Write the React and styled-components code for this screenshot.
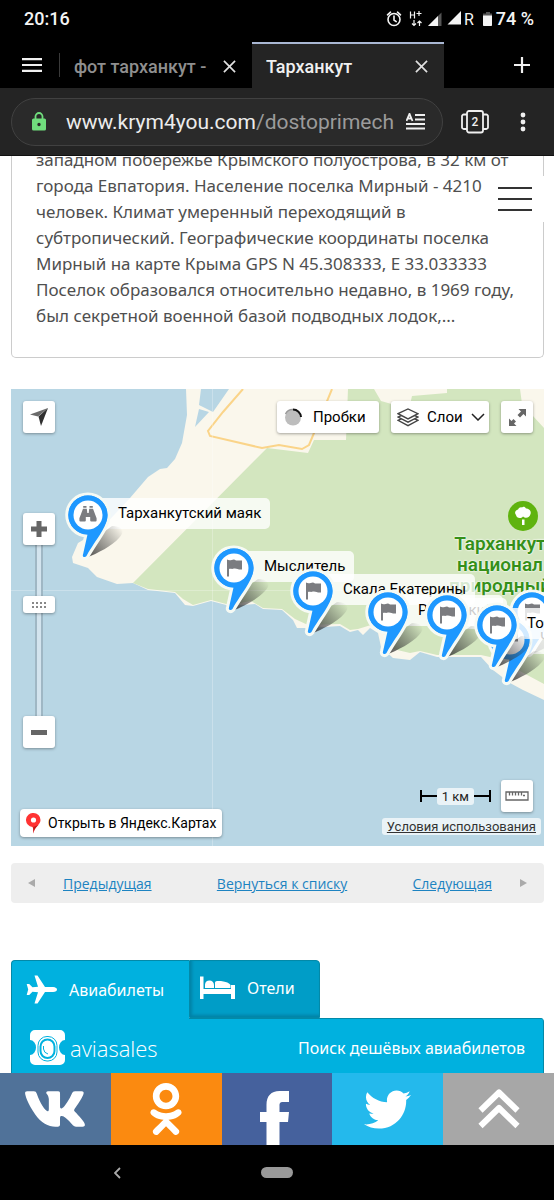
import React, { useState } from 'react';
import styled, { createGlobalStyle } from 'styled-components';
import { FaVk, FaOdnoklassniki, FaTwitter } from 'react-icons/fa';

const GlobalStyle = createGlobalStyle`
  *, *::before, *::after { box-sizing: border-box; }
  body { margin: 0; background: #000; }
  button { border: 0; padding: 0; margin: 0; background: none; color: inherit; font: inherit; cursor: pointer; }
  svg { display: block; flex: none; }
`;

const ui = 'Roboto, "Noto Sans", sans-serif';
const site = '"Noto Sans", "Open Sans", sans-serif';

const Screen = styled.div`
  display: flex;
  flex-direction: column;
  height: 100vh;
  overflow: hidden;
  background: #fff;
  font-family: ${ui};
`;

/* ---------- phone and browser chrome ---------- */

const StatusBar = styled.div`
  display: flex;
  flex: none;
  align-items: center;
  justify-content: space-between;
  height: 42px;
  padding: 0 20px 5px 24px;
  background: #000;
  color: #f4f4f4;
  font-size: 18px;
  font-weight: 500;
`;

const StatusIcons = styled.div`
  display: flex;
  align-items: center;
`;

const TabStrip = styled.div`
  display: flex;
  flex: none;
  height: 46px;
  background: #000;
  color: #e8e8e8;
`;

const StripButton = styled.button`
  display: flex;
  align-items: center;
  justify-content: center;
  width: ${(p) => p.$width}px;
  margin-left: ${(p) => (p.$end ? 'auto' : 0)};
  padding-left: ${(p) => (p.$end ? 0 : 4)}px;
`;

const BrowserTab = styled.div`
  display: flex;
  align-items: center;
  justify-content: space-between;
  width: 192px;
  padding: 0 16px 0 14px;
  border-top: 2px solid ${(p) => (p.$active ? '#a9b7d3' : 'transparent')};
  background: ${(p) => (p.$active ? '#242424' : '#000')};
  color: ${(p) => (p.$active ? '#f0f0f0' : '#8f8f8f')};
`;

const TabDivider = styled.span`
  align-self: center;
  width: 1px;
  height: 24px;
  background: #3a3a3a;
`;

const TabTitle = styled.button`
  width: 136px;
  overflow: hidden;
  text-align: left;
  white-space: nowrap;
  font-size: 18px;
  font-weight: 500;
`;

const Toolbar = styled.div`
  display: flex;
  flex: none;
  align-items: center;
  height: 68px;
  padding: 0 15px 0 11px;
  border-bottom: 1px solid #111;
  background: #242424;
  color: #ececec;
`;

const AddressBar = styled.div`
  display: flex;
  flex: 1;
  align-items: center;
  min-width: 0;
  height: 48px;
  padding: 0 17px 0 20px;
  border: 1px solid #414141;
  border-radius: 24px;
  background: #2a2a2a;
`;

const Address = styled.button`
  flex: 1;
  min-width: 0;
  margin: 0 12px 0 20px;
  overflow: hidden;
  color: #9b9b9b;
  font-size: 21px;
  text-align: left;
  white-space: nowrap;
`;

const Host = styled.span`
  color: #ececec;
`;

const ToolButton = styled.button`
  display: flex;
  align-items: center;
  justify-content: center;
  width: ${(p) => p.$width}px;
  height: 48px;
`;

/* ---------- page ---------- */

const Page = styled.main`
  position: relative;
  flex: 1;
  min-height: 0;
  padding: 0 10px 0 11px;
  overflow: hidden;
  background: #fff;
  font-family: ${site};
`;

const Card = styled.article`
  padding: 0 20px 28px 24px;
  margin-top: -9px;
  border: 1px solid #ccc;
  border-top: 0;
  border-radius: 0 0 5px 5px;
`;

const CardText = styled.p`
  margin: 0;
  color: #4f4f4f;
  font-size: 17px;
  line-height: 26px;
  white-space: pre-line;
`;

const MenuButton = styled.button`
  position: absolute;
  top: 20px;
  right: 0;
  display: flex;
  flex-direction: column;
  justify-content: center;
  gap: 9px;
  width: 65px;
  height: 46px;
  padding: 0 22px 0 9px;
  background: #fff;
`;

const MenuLine = styled.span`
  height: 2px;
  background: #333;
`;

const PagerBar = styled.nav`
  display: flex;
  align-items: center;
  justify-content: space-between;
  height: 40px;
  margin-top: 17px;
  padding: 0 17px;
  border-radius: 4px;
  background: #eee;
`;

const PagerLink = styled.a`
  display: flex;
  align-items: center;
  gap: 28px;
  color: #1d83c1;
  font-family: "Open Sans", "Noto Sans", sans-serif;
  font-size: 14px;
`;

/* ---------- map ---------- */

const MapFrame = styled.section`
  position: relative;
  height: 457px;
  margin-top: 31px;
  overflow: hidden;
  background: #b8d6e4;
  color: #000;
  font-family: ${ui};
`;

const Terrain = styled.svg`
  position: absolute;
  inset: 0;
  width: 100%;
  height: 100%;
`;

const ParkLabel = styled.div`
  position: absolute;
  left: 435px;
  top: 144px;
  width: 108px;
  color: #35901a;
  font-size: 19px;
  font-weight: 600;
  line-height: 21px;
  text-align: center;
  white-space: pre;
  text-shadow: 0 0 2px #fff, 0 0 2px #fff;
`;

const ParkIcon = styled.svg`
  position: absolute;
  left: 497px;
  top: 112px;
`;

const Placemark = styled.div`
  position: absolute;
  left: ${(p) => p.$x}px;
  top: ${(p) => p.$y}px;
`;

const PinSvg = styled.svg`
  position: absolute;
  left: -25px;
  top: -25px;
`;

const PinLabel = styled.span`
  position: absolute;
  left: 0;
  top: -17px;
  display: flex;
  gap: 41px;
  min-width: 60px;
  height: 31px;
  padding: 0 9px 0 30px;
  border-radius: 5px;
  background: rgba(255, 255, 255, 0.8);
  font-size: 15px;
  line-height: 31px;
  white-space: pre;
`;

const Controls = styled.div`
  position: absolute;
  top: ${(p) => p.$top};
  right: ${(p) => p.$right};
  bottom: ${(p) => p.$bottom};
  left: ${(p) => p.$left};
  display: flex;
  flex-direction: ${(p) => (p.$column ? 'column' : 'row')};
  align-items: ${(p) => (p.$column ? 'flex-end' : 'center')};
  gap: ${(p) => p.$gap || 0}px;
`;

const MapButton = styled.button`
  position: relative;
  display: flex;
  align-items: center;
  justify-content: ${(p) => (p.$wide ? 'flex-start' : 'center')};
  gap: ${(p) => p.$gap || 0}px;
  width: ${(p) => p.$wide || 32}px;
  height: 32px;
  padding: 0 ${(p) => (p.$wide ? 6 : 0)}px;
  border-radius: 3px;
  background: #fff;
  box-shadow: 0 1px 3px rgba(0, 0, 0, 0.35);
  font-size: 15px;
`;

const dot = (x, y) => `radial-gradient(circle, #888 1px, transparent 1px) ${x}px ${y}px / 4px 4px no-repeat`;

const ZoomRange = styled.input`
  width: 32px;
  height: 171px;
  margin: 0;
  appearance: none;
  background: linear-gradient(90deg, transparent 12px, #9fb7c4 12px 14px, #d3e4ee 14px 18px, #9fb7c4 18px 20px, transparent 20px);
  writing-mode: vertical-lr;

  &::-webkit-slider-thumb {
    appearance: none;
    width: 32px;
    height: 17px;
    border-radius: 3px;
    background:
      ${[8, 12, 16, 20].map((x) => `${dot(x, 5)}, ${dot(x, 9)}`).join(', ')},
      #fff;
    box-shadow: 0 1px 3px rgba(0, 0, 0, 0.35);
  }
`;

const OpenLink = styled.a`
  display: flex;
  align-items: center;
  gap: 7px;
  height: 28px;
  padding: 0 6px;
  border-radius: 4px;
  background: #fff;
  box-shadow: 0 1px 3px rgba(0, 0, 0, 0.35);
  color: #000;
  font-size: 14px;
  text-decoration: none;
`;

const Toolset = styled.div`
  display: flex;
  align-items: center;
  gap: 10px;
  padding-right: 8px;
`;

const ScaleRow = styled.div`
  display: flex;
  align-items: center;
`;

const ScaleEnd = styled.span`
  width: 17px;
  height: 12px;
  background: linear-gradient(#000, #000) center / 100% 2px no-repeat;
  border: solid #000;
  border-width: ${(p) => (p.$right ? '0 2px 0 0' : '0 0 0 2px')};
`;

const ScaleValue = styled.span`
  padding: 0 5px;
  border-radius: 3px;
  background: rgba(255, 255, 255, 0.7);
  color: #222;
  font-size: 13px;
  line-height: 17px;
`;

const Terms = styled.a`
  padding: 0 5px;
  border-radius: 3px;
  background: rgba(255, 255, 255, 0.7);
  color: #333;
  font-size: 13px;
  line-height: 17px;
`;

/* ---------- ticket search widget ---------- */

const Widget = styled.section`
  margin-top: 57px;
  color: #fff;
`;

const WidgetTabs = styled.div`
  display: flex;
`;

const WidgetTab = styled.button`
  position: relative;
  display: flex;
  align-items: center;
  gap: 12px;
  width: ${(p) => (p.$active ? 178 : 131)}px;
  height: 58px;
  padding: 0 10px ${(p) => (p.$active ? '0 14px' : '2px 10px')};
  border: 1px solid #0389a8;
  border-bottom-width: ${(p) => (p.$active ? 0 : 1)}px;
  border-right-width: ${(p) => (p.$active ? 0 : 1)}px;
  border-radius: ${(p) => (p.$active ? '4px 0 0 0' : '0 4px 0 0')};
  background: ${(p) => (p.$active ? '#00b1df' : '#009dc7')};
  box-shadow: ${(p) => (p.$active ? 'none' : 'inset 2px -2px 3px rgba(0, 80, 110, 0.35)')};
  font-size: 16px;
`;

const WidgetPanel = styled.div`
  display: flex;
  align-items: center;
  justify-content: space-between;
  height: 90px;
  padding: 0 18px 30px;
  border: 1px solid #0389a8;
  border-top: 0;
  border-radius: 0 4px 0 0;
  background:
    linear-gradient(#0389a8, #0389a8) 177px 0 / 100% 1px no-repeat,
    #00b1df;
  font-size: 16px;
`;

const Brand = styled.a`
  display: flex;
  align-items: center;
  gap: 5px;
  color: #fff;
  font-family: "Open Sans", sans-serif;
  font-size: 22px;
  font-weight: 300;
  text-decoration: none;
`;

/* ---------- bottom bars ---------- */

const ShareBar = styled.nav`
  display: grid;
  flex: none;
  grid-template-columns: repeat(5, 1fr);
  height: 72px;
`;

const ShareLink = styled.a`
  display: flex;
  align-items: center;
  justify-content: center;
  overflow: hidden;
  background: ${(p) => p.$color};
  color: #fff;
`;

const SystemNav = styled.div`
  display: grid;
  flex: none;
  grid-template-columns: 1fr 84px 1fr;
  align-items: center;
  justify-items: center;
  height: 55px;
  background: #000;
`;

const HomePill = styled.button`
  width: 32px;
  height: 11px;
  border-radius: 6px;
  background: #999;
`;

/* ---------- drawings ---------- */

const Cross = () => (
  <svg width="13" height="13" viewBox="0 0 14 14" stroke="#e0e0e0" strokeWidth="1.8">
    <path d="M1 1l12 12M13 1L1 13" />
  </svg>
);

const StatusGlyphs = () => (
  <svg width="110" height="20" viewBox="384 8 110 20" fill="#f4f4f4">
    <g fill="none" stroke="#f4f4f4" strokeWidth="1.6" strokeLinecap="round">
      <circle cx="392" cy="18.5" r="6" />
      <path d="M392 15v4l2.200 1.600M385.500 13.800l3-2.600M398.500 13.800l-3-2.600" />
    </g>
    <g stroke="#f4f4f4" strokeWidth="1.2" fill="none">
      <path d="M408.500 10.500v7M412.500 10.500v7M408.500 14h4M414.500 12.500h5M417 10v5" />
      <path d="M412 19v5.500M410 22.500l2 2 2-2M417.500 25v-5M415.500 22l2-2 2 2" />
    </g>
    <path d="M439.500 11.500V25H426z" fill="#555" />
    <path d="M436 15V25H426z" />
    <path d="M459 10V23.500H445.500z" />
    <path d="M484 11h4v1.500h2V25h-9V12.500h3z" fill="#555" />
    <path d="M481 14.500h9V24a1 1 0 0 1-1 1h-7a1 1 0 0 1-1-1z" />
    <text x="462" y="24" fontSize="16" fontWeight="400" fontFamily="Roboto, sans-serif">R</text>
  </svg>
);

const pinBody = 'M0 -19.5A19.5 19.5 0 0 1 19.5 0C19.5 12 8 24 -1.5 41C-3 43 -6 42 -5 39.5L-0.5 19.5A19.5 19.5 0 0 1 0 -19.5Z';

const FlagGlyph = () => (
  <path d="M-7 -8.5C-3 -6 -1 -10.5 2 -7.5L8 -7.500V1.5C4 2 3 0 0 0.5C-2 1.5 -3 0.5 -5 1V8.5H-7Z" fill="#7b7c80" />
);

const BinocularGlyph = () => (
  <g fill="#7b7c80">
    <path d="M-4.800 -9h3.300v1.800h-3.300zM1.500 -9h3.300v1.800H1.500z" />
    <path d="M-5 -6.200h3.800l.5 4.200h1.400l.5-4.200H5L8.600 3.200V5.500a1 1 0 0 1-1 1H3.200a1 1 0 0 1-1-1V2h-4.400V5.500a1 1 0 0 1-1 1H-7.600a1 1 0 0 1-1-1V3.200z" />
  </g>
);

const Pin = ({ kind }) => (
  <PinSvg width="76" height="74" viewBox="-25 -25 76 74">
    <path d="M-2 43L9 22L24 11C34 11 38 16 31 23C24 31 10 38 -2 43Z" fill="url(#pinShade)" />
    <path d={pinBody} fill="#f6faf4" stroke="#f6faf4" strokeWidth="6" strokeLinejoin="round" />
    <circle r="19.5" fill="#1e98ff" />
    <path d={pinBody} fill="#1e98ff" />
    <circle r="14.5" fill="#fff" />
    {kind === 'view' ? <BinocularGlyph /> : <FlagGlyph />}
  </PinSvg>
);

const MapTerrain = () => (
  <Terrain viewBox="0 0 533 457" preserveAspectRatio="xMinYMin slice" aria-hidden="true">
    <defs>
      <linearGradient id="pinShade" gradientUnits="userSpaceOnUse" x1="0" y1="42" x2="34" y2="14">
        <stop offset="0" stopColor="#333" stopOpacity="0.85" />
        <stop offset="0.55" stopColor="#333" stopOpacity="0.4" />
        <stop offset="1" stopColor="#333" stopOpacity="0" />
      </linearGradient>
    </defs>
    <path
      fill="#faf7ec"
      d="M175 0L176 26L171 54L164 70L156 79L149 80L137 88L119 109L89 141L67 154L61 168L62 174L77 179L86 188L106 195L122 194L137 201L164 204L174 216L182 217L200 212L219 217L244 215L252 220L271 221L282 231L286 239L297 239L329 237L339 243L347 241L352 246L359 239L367 244L370 258L382 269L399 271L409 263L426 268L470 268L482 281L499 294L512 301L533 311V0Z"
    />
    <path
      fill="#d3e6bf"
      d="M122 194L256 59L297 64L303 51H335L337 0H363L370 12L398 20L401 7L436 4V0H509L511 15L533 39V295L505 280L488 270L470 266L426 266L409 262L399 264L382 260L372 244L360 236L347 240L339 241L329 235L297 236L284 230L271 220L252 219L240 212L219 216L200 211L182 216L172 210L164 203L137 200Z"
    />
    <path fill="#b8d6e4" d="M190 0L188 16L202 23L218 0ZM188 20L198 23L184 38Z" />
    <path
      fill="none"
      stroke="#fad489"
      strokeWidth="2"
      d="M232 0L212 23L197 42L199 47L251 59L268 56L291 60L298 56L303 44L321 0"
    />
    <path stroke="#fff" strokeOpacity="0.25" d="M201.500 0V457M0 201.500H533" />
  </Terrain>
);

const placemarks = [
  { x: 521, y: 223, label: [] },
  { x: 499, y: 251, label: ['Ч'] },
  { x: 77, y: 126, label: ['Тарханкутский маяк'], kind: 'view' },
  { x: 223, y: 179, label: ['Мыслитель'] },
  { x: 302, y: 202, label: ['Скала Екатерины'] },
  { x: 377, y: 223, label: ['Р', 'кий'] },
  { x: 436, y: 226, label: [] },
  { x: 486, y: 236, label: ['Тор'] },
];

const YandexMap = () => {
  const [zoom, setZoom] = useState(33);
  return (
    <MapFrame aria-label="Карта">
      <MapTerrain />
      <ParkIcon width="30" height="30" viewBox="0 0 30 30">
        <circle cx="15" cy="15" r="15" fill="#5fb30f" />
        <path
          fill="#fff"
          d="M14 6.500C15 5.500 17 5.500 18 7.500C21 7.500 23.500 10 22.500 13C22 16 19 17.500 16.500 16.500L15 15.500C13 18 8.500 17.500 8 14C6 12 7.500 9 10 8.500C11 6.500 12.500 6 14 6.500ZM14 18.500H16.500V24H14Z"
        />
      </ParkIcon>
      <ParkLabel>{'Тарханкут\nнационал\nприродный'}</ParkLabel>
      {placemarks.map((p) => (
        <Placemark key={`${p.x}-${p.y}`} $x={p.x} $y={p.y}>
          <PinLabel>
            {p.label.map((part) => (
              <span key={part}>{part}</span>
            ))}
          </PinLabel>
          <Pin kind={p.kind} />
        </Placemark>
      ))}

      <Controls $top="12px" $left="12px">
        <MapButton aria-label="Моё местоположение">
          <svg width="18" height="18" viewBox="0 0 18 18">
            <path d="M0 6.500L18 0L8 8.500Z" fill="#6a6a6a" />
            <path d="M18 0L11 18L8.500 8.500Z" fill="#2f2f2f" />
          </svg>
        </MapButton>
      </Controls>

      <Controls $top="12px" $right="11px" $gap={12}>
        <MapButton $wide={102} $gap={10}>
          <svg width="20" height="20" viewBox="0 0 20 20">
            <circle cx="10" cy="10.500" r="8" fill="#bdbdbd" />
            <path d="M2.500 7A8 8 0 0 1 10 2.500" fill="none" stroke="#999" strokeWidth="1.500" />
            <path d="M10 2.500A8 8 0 0 1 18 10" fill="none" stroke="#111" strokeWidth="2" />
          </svg>
          Пробки
        </MapButton>
        <MapButton $wide={98} $gap={8}>
          <svg width="22" height="19" viewBox="0 0 23 20" fill="#fff" stroke="#444" strokeWidth="1.500">
            <path d="M1 13L11.500 8L22 13L11.500 18.500Z" />
            <path d="M1 9.500L11.500 4.500L22 9.500L11.500 15Z" />
            <path d="M1 6L11.500 1L22 6L11.500 11.500Z" />
          </svg>
          Слои
          <svg width="14" height="8" viewBox="0 0 14 8" fill="none" stroke="#222" strokeWidth="1.500">
            <path d="M1 1l6 6 6-6" />
          </svg>
        </MapButton>
        <MapButton aria-label="На весь экран">
          <svg width="17" height="17" viewBox="0 0 17 17" fill="#666">
            <path d="M9.500 0H17V7.500L14.500 5L11 8.500L8.500 6L12 2.500ZM7.500 17H0V9.500L2.500 12L4.500 10L7 12.500L5 14.500Z" />
          </svg>
        </MapButton>
      </Controls>

      <Controls $top="124px" $left="12px" $column>
        <MapButton aria-label="Приблизить">
          <svg width="16" height="16" viewBox="0 0 16 16" fill="#666">
            <path d="M5.500 0h5v5.500H16v5h-5.500V16h-5v-5.500H0v-5h5.500z" />
          </svg>
        </MapButton>
        <ZoomRange
          type="range"
          aria-label="Масштаб"
          value={zoom}
          onChange={(e) => setZoom(Number(e.target.value))}
        />
        <MapButton aria-label="Отдалить">
          <svg width="16" height="5" viewBox="0 0 16 5">
            <path d="M0 0h16v5H0z" fill="#666" />
          </svg>
        </MapButton>
      </Controls>

      <Controls $left="9px" $bottom="9px">
        <OpenLink href="#maps">
          <svg width="15" height="21" viewBox="0 0 15 21">
            <path d="M7.500 0A7 7 0 0 1 14.500 7C14.500 12 8 14 7.500 20.500C7 17 7.500 15.500 6.500 14A7 7 0 0 1 7.500 0Z" fill="#f33" />
            <path d="M12.500 12C9 14.500 8 17 7.500 20.500L7.200 14Z" fill="#c01a1a" />
            <circle cx="7.500" cy="7" r="2.600" fill="#fff" />
          </svg>
          Открыть в Яндекс.Картах
        </OpenLink>
      </Controls>

      <Controls $right="3px" $bottom="11px" $column $gap={6}>
        <Toolset>
          <ScaleRow>
            <ScaleEnd />
            <ScaleValue>1 км</ScaleValue>
            <ScaleEnd $right />
          </ScaleRow>
          <MapButton aria-label="Линейка">
            <svg width="24" height="10" viewBox="0 0 24 10" fill="none" stroke="#666" strokeWidth="1.300">
              <path d="M1 1H23V9H1ZM4.500 1V4.500M7.500 1V4.500M10.500 1V4.500M13.500 1V4.500M16.500 1V4.500M18 4.500h2" />
            </svg>
          </MapButton>
        </Toolset>
        <Terms href="#terms">Условия использования</Terms>
      </Controls>
    </MapFrame>
  );
};

export default function App() {
  return (
    <Screen>
      <GlobalStyle />
      <StatusBar>
        <span>20:16</span>
        <StatusIcons>
          <StatusGlyphs />
          <span>74 %</span>
        </StatusIcons>
      </StatusBar>

      <TabStrip>
        <StripButton $width={59} aria-label="Меню">
          <svg width="20" height="14" viewBox="0 0 20 14" fill="none" stroke="#f0f0f0" strokeWidth="2.200">
            <path d="M0 1.200h20M0 7h20M0 12.800h20" />
          </svg>
        </StripButton>
        <TabDivider />
        <BrowserTab>
          <TabTitle>фот тарханкут -</TabTitle>
          <button aria-label="Закрыть вкладку"><Cross /></button>
        </BrowserTab>
        <BrowserTab $active>
          <TabTitle>Тарханкут</TabTitle>
          <button aria-label="Закрыть вкладку"><Cross /></button>
        </BrowserTab>
        <StripButton $width={64} $end aria-label="Новая вкладка">
          <svg width="16" height="16" viewBox="0 0 16 16" stroke="#f0f0f0" strokeWidth="2.200">
            <path d="M8 0v16M0 8h16" />
          </svg>
        </StripButton>
      </TabStrip>

      <Toolbar>
        <AddressBar>
          <svg width="14" height="19" viewBox="0 0 14 19">
            <path d="M3.500 7V4.500a3.500 3.500 0 0 1 7 0V7" fill="none" stroke="#70dd7d" strokeWidth="1.800" />
            <path fillRule="evenodd" d="M1.500 6.500h11a1.500 1.500 0 0 1 1.500 1.500v9a1.500 1.500 0 0 1-1.500 1.500h-11A1.500 1.500 0 0 1 0 17V8a1.500 1.500 0 0 1 1.500-1.500zM7 10.800a1.700 1.700 0 1 0 0 3.400a1.700 1.700 0 0 0 0-3.400z" fill="#70dd7d" />
          </svg>
          <Address aria-label="Адрес страницы"><Host>www.krym4you.com</Host>/dostoprimechatelnosti</Address>
          <svg width="19" height="17" viewBox="0 0 19 17" fill="none" stroke="#f0f0f0" strokeWidth="1.800">
            <path d="M0.500 8L3.500 0.800L6.500 8M1.800 5.500H5.200M9 2h10M9 6.500h10M0 11h19M0 15.500h19" />
          </svg>
        </AddressBar>
        <ToolButton $width={64} aria-label="Вкладки">
          <svg width="28" height="24" viewBox="0 0 28 24" fill="none" stroke="#f0f0f0" strokeWidth="1.800">
            <rect x="6" y="1" width="16" height="21.500" rx="2" />
            <path d="M6 4.500H3A1.800 1.800 0 0 0 1 6.500V17a1.800 1.800 0 0 0 2 2h3M22 4.500h3a1.800 1.800 0 0 1 2 2V17a1.800 1.800 0 0 1-2 2h-3" />
            <text x="14" y="16" textAnchor="middle" fontSize="12" fontWeight="500" fontFamily="Roboto, sans-serif" fill="#f0f0f0" stroke="none">2</text>
          </svg>
        </ToolButton>
        <ToolButton $width={32} aria-label="Ещё">
          <svg width="6" height="20" viewBox="0 0 6 20" fill="#f0f0f0">
            <circle cx="3" cy="3" r="2.400" />
            <circle cx="3" cy="10" r="2.400" />
            <circle cx="3" cy="17" r="2.400" />
          </svg>
        </ToolButton>
      </Toolbar>

      <Page>
        <Card>
          <CardText>
            {`западном побережье Крымского полуострова, в 32 км от
города Евпатория. Население поселка Мирный - 4210
человек. Климат умеренный переходящий в
субтропический. Географические координаты поселка
Мирный на карте Крыма GPS N 45.308333, E 33.033333
Поселок образовался относительно недавно, в 1969 году,
был секретной военной базой подводных лодок,...`}
          </CardText>
        </Card>
        <MenuButton aria-label="Меню сайта">
          <MenuLine />
          <MenuLine />
          <MenuLine />
        </MenuButton>

        <YandexMap />

        <PagerBar>
          <PagerLink href="#prev">
            <svg width="7" height="8" viewBox="0 0 7 8"><path d="M7 0v8L0 4z" fill="#aaa" /></svg>
            Предыдущая
          </PagerLink>
          <PagerLink href="#list">Вернуться к списку</PagerLink>
          <PagerLink href="#next">
            Следующая
            <svg width="7" height="8" viewBox="0 0 7 8"><path d="M0 0v8l7-4z" fill="#aaa" /></svg>
          </PagerLink>
        </PagerBar>

        <Widget>
          <WidgetTabs>
            <WidgetTab $active>
              <svg width="31" height="29" viewBox="0 0 31 29" fill="#fff">
                <path d="M8.500 0.500H11.500L19 12H27Q31 12.500 31 14.500Q31 16.500 27 17H19L11.500 28.500H8.500L12 17.200L6.500 16.800L3.200 20H0.700L2.200 14.500L0.700 9H3.200L6.500 12.200L12 11.800Z" />
              </svg>
              Авиабилеты
            </WidgetTab>
            <WidgetTab>
              <svg width="35" height="24" viewBox="0 0 35 24" fill="#fff">
                <path d="M0 0.500h3.500V13H31V9h4v14h-4v-5H3.500v5H0z" />
                <path d="M5 12V8.500A4.500 4.500 0 0 1 9.500 4.500A4.500 4.500 0 0 1 14 9V12zM15 12V6.500Q15 5 17 5H21Q29 6 30.500 9V12z" />
              </svg>
              Отели
            </WidgetTab>
          </WidgetTabs>
          <WidgetPanel>
            <Brand href="#aviasales">
              <svg width="35" height="35" viewBox="0 0 35 35">
                <path d="M5 0H30A5 5 0 0 1 35 5V10A6 7.500 0 0 0 35 25V30A5 5 0 0 1 30 35H5A5 5 0 0 1 0 30V25A6 7.500 0 0 0 0 10V5A5 5 0 0 1 5 0Z" fill="#fff" />
                <rect x="8" y="6.500" width="19" height="24.500" rx="9" fill="#fff" stroke="#00b1df" />
                <rect x="10.500" y="9.500" width="14" height="18.500" rx="7" fill="#fff" stroke="#00b1df" strokeWidth="2" />
                <path d="M13.500 16V19Q14 23 18 24" fill="none" stroke="#00b1df" />
              </svg>
              aviasales
            </Brand>
            <span>Поиск дешёвых авиабилетов</span>
          </WidgetPanel>
        </Widget>
      </Page>

      <ShareBar>
        <ShareLink href="#vk" $color="#507299" aria-label="ВКонтакте"><FaVk size={64} /></ShareLink>
        <ShareLink href="#ok" $color="#fb8a10" aria-label="Одноклассники"><FaOdnoklassniki size={52} /></ShareLink>
        <ShareLink href="#fb" $color="#45619d" aria-label="Facebook">
          <svg width="34" height="72" viewBox="0 0 34 72" fill="#fff">
            <path d="M6.500 72V49H0V39H6.500V32C6.500 23 11 18 19.500 18H29V29H23C20 29 19.500 30 19.500 33V39H29L28 49H19.500V72Z" />
          </svg>
        </ShareLink>
        <ShareLink href="#tw" $color="#24b9ec" aria-label="Twitter"><FaTwitter size={47} /></ShareLink>
        <ShareLink href="#top" $color="#a7a7a7" aria-label="Наверх">
          <svg width="42" height="42" viewBox="0 0 42 42" fill="none" stroke="#fff" strokeWidth="6" strokeLinejoin="round">
            <path d="M2.500 22.500L21 4.500L39.500 22.500M2.500 38L21 20L39.500 38" />
          </svg>
        </ShareLink>
      </ShareBar>

      <SystemNav>
        <button aria-label="Назад">
          <svg width="7" height="12" viewBox="0 0 7 12" fill="none" stroke="#aaa" strokeWidth="1.800">
            <path d="M6 1L1 6l5 5" />
          </svg>
        </button>
        <HomePill aria-label="Домой" />
      </SystemNav>
    </Screen>
  );
}
